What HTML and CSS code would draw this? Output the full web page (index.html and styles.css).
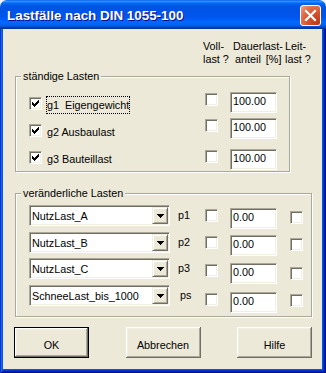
FILE: index.html
```html
<!DOCTYPE html>
<html lang="de">
<head>
<meta charset="utf-8">
<title>Lastfälle nach DIN 1055-100</title>
<link rel="stylesheet" href="styles.css">
</head>
<body>
<div class="window">
  <div class="titlebar">
    <span class="title">Lastfälle nach DIN 1055-100</span>
    <span class="close"><svg width="19" height="19" viewBox="0 0 19 19"><path d="M5 5L14 14M14 5L5 14" stroke="#fff" stroke-width="2.2" stroke-linecap="square"/></svg></span>
  </div>
  <div class="frame">
    <div class="client">
      <div class="heads">
        <div class="head h-voll">Voll-<br>last ?</div>
        <div class="head h-dauer"><span class="hl">Dauerlast-</span><span class="hl indent">anteil [%]</span></div>
        <div class="head h-leit">Leit-<br>last ?</div>
      </div>

      <div class="group g-perm">
        <span class="legend">ständige Lasten</span>
        <div class="col-names">
          <div class="lrow"><span class="cb"><svg width="11" height="11" viewBox="0 0 11 11"><path d="M8 2h1v1h-1zM7 3h2v1h-2zM2 4h1v1h-1zM6 4h3v1h-3zM2 5h2v1h-2zM5 5h3v1h-3zM2 6h5v1h-5zM3 7h3v1h-3zM4 8h1v1h-1z" fill="#000"/></svg></span><span class="lbl focus">g1  Eigengewicht</span></div>
          <div class="lrow"><span class="cb"><svg width="11" height="11" viewBox="0 0 11 11"><path d="M8 2h1v1h-1zM7 3h2v1h-2zM2 4h1v1h-1zM6 4h3v1h-3zM2 5h2v1h-2zM5 5h3v1h-3zM2 6h5v1h-5zM3 7h3v1h-3zM4 8h1v1h-1z" fill="#000"/></svg></span><span class="lbl">g2 Ausbaulast</span></div>
          <div class="lrow"><span class="cb"><svg width="11" height="11" viewBox="0 0 11 11"><path d="M8 2h1v1h-1zM7 3h2v1h-2zM2 4h1v1h-1zM6 4h3v1h-3zM2 5h2v1h-2zM5 5h3v1h-3zM2 6h5v1h-5zM3 7h3v1h-3zM4 8h1v1h-1z" fill="#000"/></svg></span><span class="lbl">g3 Bauteillast</span></div>
        </div>
        <div class="col-vals">
          <div class="vrow"><span class="cb"></span><span class="tb">100.00</span></div>
          <div class="vrow next"><span class="cb"></span><span class="tb">100.00</span></div>
          <div class="vrow next wide"><span class="cb"></span><span class="tb">100.00</span></div>
        </div>
      </div>

      <div class="group g-var">
        <span class="legend">veränderliche Lasten</span>
        <div class="col-combos">
          <div class="crow"><div class="combo"><span class="combo-text">NutzLast_A</span><span class="combo-btn"><svg width="7" height="4" viewBox="0 0 7 4"><path d="M0 0h7v1H0zM1 1h5v1H1zM2 2h3v1H2zM3 3h1v1H3z" fill="#000"/></svg></span></div><span class="plabel">p1</span></div>
          <div class="crow g6"><div class="combo"><span class="combo-text">NutzLast_B</span><span class="combo-btn"><svg width="7" height="4" viewBox="0 0 7 4"><path d="M0 0h7v1H0zM1 1h5v1H1zM2 2h3v1H2zM3 3h1v1H3z" fill="#000"/></svg></span></div><span class="plabel">p2</span></div>
          <div class="crow g5"><div class="combo"><span class="combo-text">NutzLast_C</span><span class="combo-btn"><svg width="7" height="4" viewBox="0 0 7 4"><path d="M0 0h7v1H0zM1 1h5v1H1zM2 2h3v1H2zM3 3h1v1H3z" fill="#000"/></svg></span></div><span class="plabel">p3</span></div>
          <div class="crow g6"><div class="combo"><span class="combo-text">SchneeLast_bis_1000</span><span class="combo-btn"><svg width="7" height="4" viewBox="0 0 7 4"><path d="M0 0h7v1H0zM1 1h5v1H1zM2 2h3v1H2zM3 3h1v1H3z" fill="#000"/></svg></span></div><span class="plabel ps">ps</span></div>
        </div>
        <div class="col-flags">
          <div class="frow"><span class="cb"></span><span class="tb">0.00</span></div>
          <div class="frow g6"><span class="cb"></span><span class="tb">0.00</span></div>
          <div class="frow g7"><span class="cb"></span><span class="tb">0.00</span></div>
          <div class="frow g8"><span class="cb"></span><span class="tb">0.00</span></div>
        </div>
        <div class="col-leit">
          <span class="cb"></span>
          <span class="cb g14"></span>
          <span class="cb g16"></span>
          <span class="cb g14"></span>
        </div>
      </div>

      <div class="buttons">
        <div class="btn default">OK</div>
        <div class="btn">Abbrechen</div>
        <div class="btn">Hilfe</div>
      </div>
    </div>
  </div>
</div>
</body>
</html>
```

FILE: styles.css
```css
html, body {
  margin: 0;
  padding: 0;
  background: #f4f3ee;
}

body {
  font-family: "Liberation Sans", Arial, sans-serif;
  font-size: 10.8px;
  color: #000;
}

.window {
  width: 326px;
  height: 373px;
  display: flex;
  flex-direction: column;
}

.titlebar {
  height: 29px;
  flex: none;
  box-sizing: border-box;
  display: flex;
  align-items: center;
  justify-content: space-between;
  padding: 0 5px 0 7px;
  border-radius: 7px 7px 0 0;
  background: linear-gradient(to bottom,
    #0058ee 0%, #3593ff 4%, #288eff 6%, #127dff 8%, #036ffc 10%,
    #0262ee 14%, #0057e5 20%, #0054e3 24%, #0055eb 56%, #005bf5 66%,
    #026afe 76%, #0062ef 86%, #0052d6 92%, #0040ab 94%, #003092 100%);
}

.title {
  color: #fff;
  font-weight: bold;
  font-size: 13.4px;
  line-height: 15px;
  padding-top: 1px;
  text-shadow: 1px 1px #0f1089;
  white-space: nowrap;
}

.close {
  width: 21px;
  height: 21px;
  box-sizing: border-box;
  margin-top: 2px;
  border: 1px solid #fff;
  border-radius: 3px;
  display: flex;
  background: radial-gradient(circle at 85% 85%, #c0391a 0%, #d8552f 45%, #e0704c 70%, #f0a68c 100%);
}

.close svg {
  display: block;
}

.frame {
  flex: 1;
  display: flex;
  padding: 0 4px 4px 3px;
  background: #0054e3;
  box-shadow:
    inset 1px 0 #0831d9, inset -1px -1px #00138c,
    inset 2px 0 #166aee, inset -2px -2px #001ea0,
    inset 3px 0 #0855dd, inset -3px -3px #003bda;
}

.client {
  flex: 1;
  background: #ece9d8;
  display: flex;
  flex-direction: column;
  align-items: flex-start;
}

/* column headers */
.heads {
  display: flex;
  margin-top: 11px;
  padding-left: 200px;
  line-height: 13px;
  white-space: pre;
}

.h-voll {
  width: 30px;
}

.h-dauer {
  width: 52px;
  display: flex;
  flex-direction: column;
}

.hl.indent {
  padding-left: 2px;
  word-spacing: 2px;
}

/* group boxes */
.group {
  position: relative;
  display: flex;
  box-sizing: border-box;
  margin-left: 12px;
  border: 1px solid #aca899;
  box-shadow: inset 1px 1px #fff, 1px 1px #fff;
}

.g-perm {
  margin-top: 10px;
  width: 275px;
  height: 96px;
}

.g-var {
  margin-top: 21px;
  width: 297px;
  height: 124px;
}

.legend {
  position: absolute;
  top: -7px;
  left: 5px;
  padding: 0 2px;
  line-height: 13px;
  background: #ece9d8;
  white-space: nowrap;
}

/* common controls */
.cb {
  display: block;
  flex: none;
  width: 13px;
  height: 13px;
  box-sizing: border-box;
  background: #fff;
  border: 1px solid;
  border-color: #aca899 #fff #fff #aca899;
  box-shadow: inset 1px 1px #716f64, inset -1px -1px #f1efe2;
}

.cb svg {
  display: block;
}

.tb {
  display: block;
  flex: none;
  width: 47px;
  height: 21px;
  box-sizing: border-box;
  margin-left: 12px;
  padding: 1px 0 0 2px;
  line-height: 15px;
  background: #fff;
  border: 1px solid;
  border-color: #aca899 #fff #fff #aca899;
  box-shadow: inset 1px 1px #716f64, inset -1px -1px #f1efe2;
}

/* group 1 */
.col-names {
  width: 189px;
  box-sizing: border-box;
  padding: 19px 0 0 13px;
  display: flex;
  flex-direction: column;
  gap: 9px;
}

.lrow {
  display: flex;
  align-items: flex-start;
  height: 18px;
}

.lrow .cb {
  margin-top: 1px;
}

.lbl {
  margin-left: 4px;
  height: 18px;
  box-sizing: border-box;
  border: 1px dotted transparent;
  line-height: 16px;
  white-space: pre;
}

.lbl.focus {
  border-color: #000;
  width: 84px;
  overflow: hidden;
}

.col-vals {
  padding-top: 15px;
  display: flex;
  flex-direction: column;
}

.vrow {
  display: flex;
  align-items: flex-start;
}

.vrow .cb {
  margin-top: 1px;
}

.vrow.next {
  margin-top: 5px;
}

.vrow.wide {
  margin-top: 10px;
}

/* group 2 */
.col-combos {
  width: 189px;
  box-sizing: border-box;
  padding: 11px 0 0 13px;
  display: flex;
  flex-direction: column;
}

.crow {
  display: flex;
  align-items: flex-start;
}

.crow.g6 {
  margin-top: 6px;
}

.crow.g5 {
  margin-top: 5px;
}

.combo {
  width: 141px;
  height: 21px;
  box-sizing: border-box;
  display: flex;
  padding: 1px;
  background: #fff;
  border: 1px solid;
  border-color: #aca899 #fff #fff #aca899;
  box-shadow: inset 1px 1px #716f64, inset -1px -1px #f1efe2;
}

.combo-text {
  flex: 1;
  padding: 1px 0 0 1px;
  line-height: 16px;
  white-space: nowrap;
  overflow: hidden;
}

.combo-btn {
  flex: none;
  width: 16px;
  height: 17px;
  box-sizing: border-box;
  display: flex;
  align-items: center;
  justify-content: center;
  background: #ece9d8;
  border: 1px solid;
  border-color: #f1efe2 #716f64 #716f64 #f1efe2;
  box-shadow: inset 1px 1px #fff, inset -1px -1px #aca899;
}

.combo-btn svg {
  display: block;
}

.plabel {
  margin-left: 8px;
  margin-top: 4px;
  line-height: 13px;
}

.plabel.ps {
  margin-left: 10px;
}

.col-flags {
  width: 85px;
  padding-top: 14px;
  display: flex;
  flex-direction: column;
}

.frow {
  display: flex;
  align-items: flex-start;
}

.frow .cb {
  margin-top: 1px;
}

.frow.g6 { margin-top: 6px; }
.frow.g7 { margin-top: 7px; }
.frow.g8 { margin-top: 8px; }

.col-leit {
  padding-top: 17px;
  display: flex;
  flex-direction: column;
}

.col-leit .g14 { margin-top: 14px; }
.col-leit .g16 { margin-top: 16px; }

/* buttons */
.buttons {
  align-self: stretch;
  display: flex;
  justify-content: space-between;
  margin-top: 10px;
  padding: 0 10px 0 11px;
}

.btn {
  width: 75px;
  height: 31px;
  box-sizing: border-box;
  display: flex;
  justify-content: center;
  align-items: center;
  padding-top: 6px;
  line-height: 13px;
  background: #ece9d8;
  box-shadow:
    inset -1px -1px #716f64, inset 1px 1px #fff,
    inset -2px -2px #aca899, inset 2px 2px #f1efe2;
}

.btn.default {
  border: 1px solid #000;
}
```
